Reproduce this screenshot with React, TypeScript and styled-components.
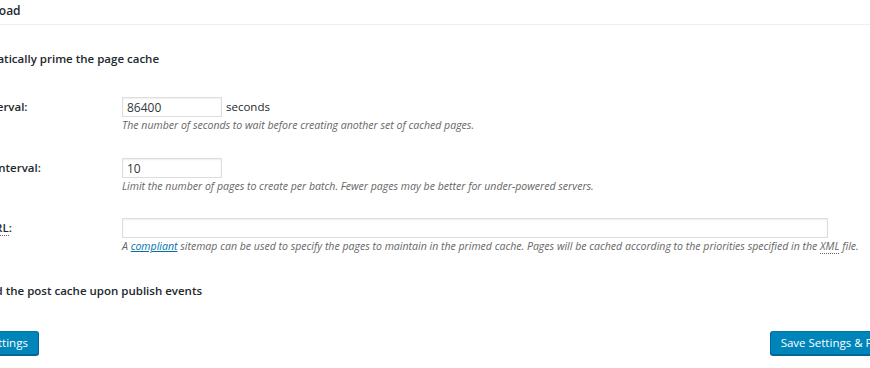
import React from 'react';
import styled, { createGlobalStyle } from 'styled-components';

const GlobalStyle = createGlobalStyle`
  html, body {
    margin: 0;
    padding: 0;
    background: #fff;
    overflow: hidden;
  }
  body {
    font-family: 'Open Sans', 'Liberation Sans', sans-serif;
    font-size: 11.5px;
    color: #23282d;
  }
`;

const Page = styled.div`
  width: 870px;
  height: 368px;
  overflow: hidden;
`;

const Postbox = styled.div`
  margin-left: -66px;
  width: 1100px;
`;

const BoxHeader = styled.h3`
  margin: 0;
  height: 24px;
  padding-left: 42px;
  border-bottom: 1px solid #eee;
  font-size: 12px;
  font-weight: 600;
  line-height: 21px;
`;

const Inside = styled.div`
  padding-left: 4px;
`;

const CheckRow = styled.div<{ $top: number }>`
  display: flex;
  align-items: center;
  gap: 4px;
  margin-top: ${p => p.$top}px;
  margin-left: 2px;
  height: 18px;
  font-weight: 600;
  font-size: 11.5px;
`;

const Check = styled.input`
  width: 16px;
  height: 16px;
  margin: 0;
`;

const FieldRow = styled.div<{ $top: number }>`
  display: grid;
  grid-template-columns: 174px 1fr;
  column-gap: 10px;
  margin-top: ${p => p.$top}px;
`;

const Label = styled.label`
  font-weight: 600;
  line-height: 18px;
  padding-top: 1px;
`;

const Field = styled.div`
  display: flex;
  flex-direction: column;
`;

const InputLine = styled.div`
  display: flex;
  align-items: center;
  gap: 4px;
`;

const TextInput = styled.input<{ $width: number }>`
  box-sizing: border-box;
  width: ${p => p.$width}px;
  height: 20px;
  margin: 0;
  padding: 0 4px;
  border: 1px solid #ddd;
  box-shadow: inset 0 1px 2px rgba(0, 0, 0, 0.07);
  background: #fff;
  color: #32373c;
  font-family: inherit;
  font-size: 12px;
  outline: none;
`;

const Unit = styled.span`
  line-height: 18px;
`;

const Description = styled.span`
  display: block;
  font-style: italic;
  font-size: 10.55px;
  line-height: 16px;
  color: #666;
  white-space: nowrap;

  a {
    color: #0073aa;
  }
`;

const Abbr = styled.abbr`
  text-decoration: none;
  border-bottom: 1px dotted #666;
`;

const Footer = styled.div`
  display: flex;
  justify-content: space-between;
  margin-top: 32px;
  margin-left: -2px;
  padding-right: 85px;
`;

const Button = styled.button`
  height: 24px;
  padding: 0 10px;
  border: 1px solid #0073aa;
  border-color: #0073aa #006799 #006799;
  border-radius: 3px;
  background: #0085ba;
  box-shadow: 0 1px 0 #006799;
  color: #fff;
  font-family: inherit;
  font-size: 11.5px;
  line-height: 22px;
  white-space: nowrap;
`;

export default function App() {
  return (
    <Page>
      <GlobalStyle />
      <Postbox>
        <BoxHeader>Preload</BoxHeader>
        <Inside>
          <CheckRow $top={24}>
            <Check type="checkbox" />
            <label>Automatically prime the page cache</label>
          </CheckRow>

          <FieldRow $top={30}>
            <Label>Update interval:</Label>
            <Field>
              <InputLine>
                <TextInput $width={100} defaultValue="86400" />
                <Unit>seconds</Unit>
              </InputLine>
              <Description>The number of seconds to wait before creating another set of cached pages.</Description>
            </Field>
          </FieldRow>

          <FieldRow $top={25}>
            <Label>Pages per interval:</Label>
            <Field>
              <InputLine>
                <TextInput $width={100} defaultValue="10" />
              </InputLine>
              <Description>Limit the number of pages to create per batch. Fewer pages may be better for under-powered servers.</Description>
            </Field>
          </FieldRow>

          <FieldRow $top={24}>
            <Label>Sitemap <Abbr title="Uniform Resource Locator">URL</Abbr>:</Label>
            <Field>
              <InputLine>
                <TextInput $width={706} defaultValue="" />
              </InputLine>
              <Description>
                A <a href="#">compliant</a> sitemap can be used to specify the pages to maintain in the primed cache. Pages will be cached according to the priorities specified in the <Abbr title="eXtensible Markup Language">XML</Abbr> file.
              </Description>
            </Field>
          </FieldRow>

          <CheckRow $top={27}>
            <Check type="checkbox" />
            <label>Preload the post cache upon publish events</label>
          </CheckRow>
        </Inside>
        <Footer>
          <Button>Save all settings</Button>
          <Button>Save Settings &amp; Purge Caches</Button>
        </Footer>
      </Postbox>
    </Page>
  );
}
